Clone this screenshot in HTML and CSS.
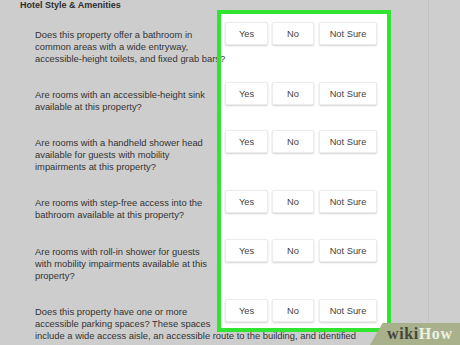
FILE: index.html
```html
<!DOCTYPE html>
<html>
<head>
<meta charset="utf-8">
<link rel="stylesheet" href="styles.css">
</head>
<body>
<h1 class="title">Hotel Style &amp; Amenities</h1>
<div class="main">
  <div class="questions">
    <div class="row r3"><p class="q">Does this property offer a bathroom in<br>common areas with a wide entryway,<br>accessible-height toilets, and fixed grab bars?</p></div>
    <div class="row r2"><p class="q">Are rooms with an accessible-height sink<br>available at this property?</p></div>
    <div class="row r3"><p class="q">Are rooms with a handheld shower head<br>available for guests with mobility<br>impairments at this property?</p></div>
    <div class="row r2b"><p class="q">Are rooms with step-free access into the<br>bathroom available at this property?</p></div>
    <div class="row r3"><p class="q">Are rooms with roll-in shower for guests<br>with mobility impairments available at this<br>property?</p></div>
    <div class="row r4"><p class="q">Does this property have one or more<br>accessible parking spaces? These spaces<br>include a wide access aisle, an accessible route to the building, and identified</p></div>
  </div>
  <div class="panel">
    <div class="row r3"><div class="btns"><span class="btn b-yes">Yes</span><span class="btn b-no">No</span><span class="btn b-ns">Not Sure</span></div></div>
    <div class="row r2"><div class="btns"><span class="btn b-yes">Yes</span><span class="btn b-no">No</span><span class="btn b-ns">Not Sure</span></div></div>
    <div class="row r3"><div class="btns"><span class="btn b-yes">Yes</span><span class="btn b-no">No</span><span class="btn b-ns">Not Sure</span></div></div>
    <div class="row r2b"><div class="btns"><span class="btn b-yes">Yes</span><span class="btn b-no">No</span><span class="btn b-ns">Not Sure</span></div></div>
    <div class="row r3"><div class="btns"><span class="btn b-yes">Yes</span><span class="btn b-no">No</span><span class="btn b-ns">Not Sure</span></div></div>
    <div class="row"><div class="btns"><span class="btn b-yes">Yes</span><span class="btn b-no">No</span><span class="btn b-ns">Not Sure</span></div></div>
  </div>
</div>
<div class="highlight"></div>
<div class="badge"><span class="wiki">wiki</span><span class="how">How</span></div>
</body>
</html>
```

FILE: styles.css
```css
html, body {
  margin: 0;
  padding: 0;
}
body {
  width: 460px;
  height: 345px;
  overflow: hidden;
  position: relative;
  background: linear-gradient(to right, #cdcdcd 428px, #c2c2c2 428px, #c2c2c2 429px, #cecece 429px);
  font-family: "Liberation Sans", Arial, sans-serif;
  color: #333;
}
.title {
  margin: 0;
  padding-left: 20px;
  font-size: 9px;
  font-weight: bold;
  line-height: 10px;
  height: 10px;
  color: #2e2e2e;
}
.main {
  display: flex;
  align-items: flex-start;
}
.questions {
  width: 182px;
  padding-left: 35px;
  padding-top: 12px;
  flex-shrink: 0;
  z-index: 1;
}
.panel {
  width: 166px;
  height: 310px;
  padding: 12px 0 0 8px;
  background: #fff;
  flex-shrink: 0;
  overflow: hidden;
}
.row {
  height: 60px;
}
.r2 { height: 48px; }
.r2b { height: 49px; }
.r3 { height: 60px; }
.r4 { height: 48px; }
.q {
  margin: 0;
  padding-top: 7px;
  font-size: 9.4px;
  line-height: 12px;
  white-space: nowrap;
}
.btns {
  display: flex;
  gap: 4px;
}
.btn {
  display: flex;
  align-items: center;
  justify-content: center;
  height: 23px;
  box-sizing: border-box;
  background: #fff;
  border: 1px solid #ececec;
  border-radius: 2px;
  box-shadow: 0 1px 2px rgba(0, 0, 0, 0.18);
  font-size: 9.3px;
  color: #444;
}
.b-yes { width: 43px; }
.b-no { width: 42px; }
.b-ns { width: 58px; margin-left: 1px; }
.highlight {
  position: absolute;
  left: 217px;
  top: 10px;
  width: 174px;
  height: 322px;
  box-sizing: border-box;
  border: 4px solid #30e530;
  z-index: 2;
}
.badge {
  position: absolute;
  left: 370px;
  top: 323px;
  width: 90px;
  height: 22px;
  background: #a8b08c;
  clip-path: polygon(14% 0, 100% 0, 100% 100%, 0 100%);
  z-index: 3;
  font-family: "Liberation Serif", "Times New Roman", serif;
  font-weight: bold;
  font-size: 16px;
  line-height: 22px;
  letter-spacing: 0.6px;
  padding-left: 17px;
  box-sizing: border-box;
  white-space: nowrap;
}
.wiki { color: #45463a; }
.how { color: #eef1e2; }
```
